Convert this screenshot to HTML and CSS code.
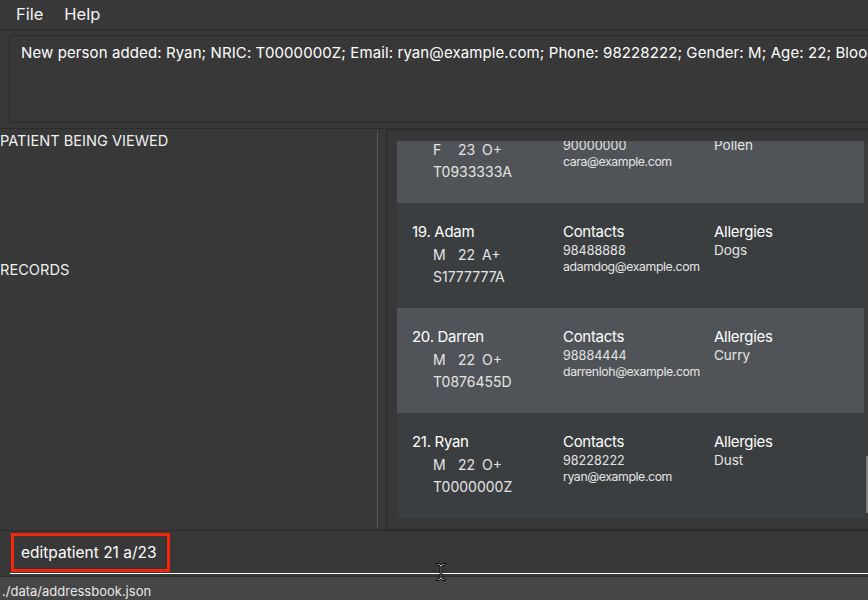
FILE: index.html
```html
<!DOCTYPE html>
<html>
<head>
<meta charset="utf-8">
<title>MediBook</title>
<link rel="stylesheet" href="styles.css">
</head>
<body>
<div class="app">
  <div class="menubar">
    <span class="menu-item">File</span>
    <span class="menu-item">Help</span>
  </div>
  <div class="result-wrap">
    <div class="result">New person added: Ryan; NRIC: T0000000Z; Email: ryan@example.com; Phone: 98228222; Gender: M; Age: 22; Blood type: O+; Allergies: [Dust]</div>
  </div>
  <div class="main">
    <div class="left">
      <div class="section-title">PATIENT BEING VIEWED</div>
      <div class="section-title records">RECORDS</div>
    </div>
    <div class="divider"></div>
    <div class="right">
      <div class="list">
        <div class="viewport">
          <div class="cards">
            <div class="card light">
              <div class="col">
                <div class="name">18. Cara</div>
                <div class="sub">
                  <div class="sub-line"><span class="g">F</span><span class="a">23</span><span>O+</span></div>
                  <div class="sub-line">T0933333A</div>
                </div>
              </div>
              <div class="col">
                <div class="head">Contacts</div>
                <div class="phone">90000000</div>
                <div class="email">cara@example.com</div>
              </div>
              <div class="col">
                <div class="head">Allergies</div>
                <div class="item">Pollen</div>
              </div>
            </div>
            <div class="card dark">
              <div class="col">
                <div class="name">19. Adam</div>
                <div class="sub">
                  <div class="sub-line"><span class="g">M</span><span class="a">22</span><span>A+</span></div>
                  <div class="sub-line">S1777777A</div>
                </div>
              </div>
              <div class="col">
                <div class="head">Contacts</div>
                <div class="phone">98488888</div>
                <div class="email">adamdog@example.com</div>
              </div>
              <div class="col">
                <div class="head">Allergies</div>
                <div class="item">Dogs</div>
              </div>
            </div>
            <div class="card light">
              <div class="col">
                <div class="name">20. Darren</div>
                <div class="sub">
                  <div class="sub-line"><span class="g">M</span><span class="a">22</span><span>O+</span></div>
                  <div class="sub-line">T0876455D</div>
                </div>
              </div>
              <div class="col">
                <div class="head">Contacts</div>
                <div class="phone">98884444</div>
                <div class="email">darrenloh@example.com</div>
              </div>
              <div class="col">
                <div class="head">Allergies</div>
                <div class="item">Curry</div>
              </div>
            </div>
            <div class="card dark">
              <div class="col">
                <div class="name">21. Ryan</div>
                <div class="sub">
                  <div class="sub-line"><span class="g">M</span><span class="a">22</span><span>O+</span></div>
                  <div class="sub-line">T0000000Z</div>
                </div>
              </div>
              <div class="col">
                <div class="head">Contacts</div>
                <div class="phone">98228222</div>
                <div class="email">ryan@example.com</div>
              </div>
              <div class="col">
                <div class="head">Allergies</div>
                <div class="item">Dust</div>
              </div>
            </div>
          </div>
        </div>
        <div class="scrollbar"><div class="thumb"></div></div>
      </div>
    </div>
  </div>
  <div class="command">
    <div class="field">
      <div class="cmd-box">editpatient 21 a/23</div>
    </div>
  </div>
  <div class="status">./data/addressbook.json</div>
  <svg class="ibeam" width="12" height="20" viewBox="0 0 12 20">
    <path d="M1.5 1.5 H4 L6 3 L8 1.5 H10.5 V3 H8 L6.8 4 V16 L8 17 H10.5 V18.5 H8 L6 17 L4 18.5 H1.5 V17 H4 L5.2 16 V4 L4 3 H1.5 Z" fill="#ffffff" stroke="#000000" stroke-width="1"/>
  </svg>
</div>
</body>
</html>
```
FILE: styles.css
```css
* { box-sizing: border-box; }
html, body { margin: 0; padding: 0; }
body {
  background: #383838;
  font-family: "Inter", "Liberation Sans", sans-serif;
  color: #ffffff;
  width: 868px;
  height: 600px;
  overflow: hidden;
}
.app {
  position: relative;
  width: 868px;
  height: 600px;
  display: flex;
  flex-direction: column;
  overflow: hidden;
}
.menubar {
  height: 30px;
  border-bottom: 1px solid #2b2b2b;
  display: flex;
  align-items: center;
  gap: 21px;
  padding-left: 16px;
  padding-bottom: 2px;
  font-size: 16.5px;
  color: #f2f2f2;
  flex: none;
}
.result-wrap {
  padding: 5px 0 5px 9px;
  flex: none;
}
.result {
  height: 88px;
  margin-right: -30px;
  border: 1px solid #2b2b2b;
  padding: 7px 0 0 11px;
  font-size: 15px;
  line-height: 20px;
  letter-spacing: 0.1px;
  white-space: nowrap;
  overflow: hidden;
  color: #ffffff;
}
.main {
  border-top: 1px solid #2b2b2b;
  height: 402px;
  display: flex;
  flex: none;
}
.left {
  width: 377px;
  padding-top: 2px;
  flex: none;
}
.section-title {
  font-size: 14.6px;
  line-height: 20px;
  color: #f0f0f0;
}
.records { margin-top: 109px; }
.divider {
  width: 1px;
  background: #545454;
  margin: 1px 0 2px;
  flex: none;
}
.right {
  flex: 1;
  padding: 1px 0 0 8px;
}
.list {
  height: 400px;
  margin-right: -4px;
  border: 1px solid #2b2b2b;
  padding: 10px 0 10px 10px;
  display: flex;
}
.viewport {
  width: 467px;
  height: 378px;
  overflow: hidden;
  flex: none;
}
.cards { margin-top: -43px; }
.card {
  height: 105px;
  padding: 19px 0 0 15px;
  display: grid;
  grid-template-columns: 151px 151px 1fr;
}
.card.light { background: #505458; }
.card.dark { background: #3b3e40; }
.name, .head {
  font-size: 15px;
  line-height: 20px;
  letter-spacing: -0.3px;
  color: #ffffff;
}
.sub {
  padding-left: 21px;
  margin-top: 2px;
}
.sub-line {
  font-size: 14px;
  line-height: 22px;
  color: #e4e4e4;
}
.sub-line .g { display: inline-block; width: 25px; }
.sub-line .a { display: inline-block; width: 24px; }
.phone {
  font-size: 12.6px;
  line-height: 17px;
  color: #e4e4e4;
}
.email {
  font-size: 12.3px;
  line-height: 16px;
  letter-spacing: -0.4px;
  color: #e4e4e4;
}
.item {
  font-size: 13.5px;
  line-height: 17px;
  color: #e4e4e4;
}
.scrollbar {
  width: 5px;
  height: 378px;
  background: #3a3c3e;
  display: flex;
  flex-direction: column;
  justify-content: flex-end;
  padding-bottom: 6px;
  flex: none;
}
.thumb {
  width: 2px;
  height: 57px;
  margin-left: 2px;
  background: #7a7a7a;
}
.command {
  border-top: 1px solid #2b2b2b;
  height: 46px;
  padding-left: 10px;
  flex: none;
}
.field {
  height: 41px;
  border-bottom: 1px solid #ffffff;
}
.cmd-box {
  margin: 2px 0 0 1px;
  width: 159px;
  height: 39px;
  border: 3px solid #f5250a;
  padding-left: 7px;
  font-size: 15.5px;
  line-height: 33px;
  color: #ffffff;
}
.status {
  border-top: 1px solid #2b2b2b;
  background: #464646;
  flex: 1;
  padding: 4px 0 0 2px;
  font-size: 13px;
  line-height: 20px;
  color: #e8e8e8;
}
.ibeam {
  position: absolute;
  left: 435px;
  top: 562px;
}
```
